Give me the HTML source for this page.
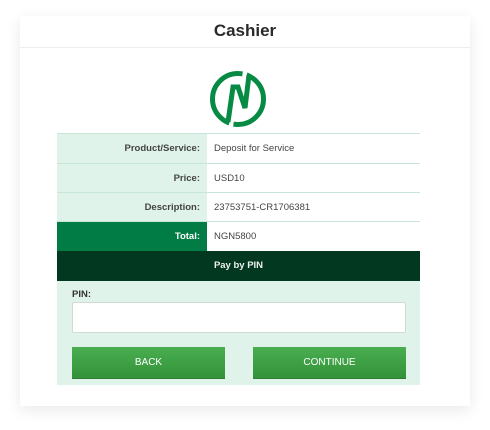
<!DOCTYPE html>
<html><head><style>
body{margin:0;width:490px;height:430px;background:#fff;font-family:"Liberation Sans",Arial,sans-serif;position:relative;overflow:hidden}
.card{position:absolute;left:20px;top:16px;width:450px;height:390px;background:#fff;box-shadow:0 4px 14px rgba(0,0,0,0.09)}
.hd{position:absolute;left:20px;top:16px;width:450px;height:31px;border-bottom:1px solid #eee;text-align:center;font-weight:bold;font-size:17px;line-height:29px;color:#2a2a2a}
.row{position:absolute;left:57px;width:363px;height:29px;border-top:1px solid #c7e6d8;font-size:9.5px;line-height:29px}
.row .l{position:absolute;left:0;top:0;width:150px;height:29px;background:#dff3ea;text-align:right;box-sizing:border-box;padding-right:7px;font-weight:bold;color:#444}
.row .v{position:absolute;left:157px;top:0;color:#444}
.bar{position:absolute;left:57px;top:251px;width:363px;height:30px;background:#023820;color:#f0f0f0;font-weight:bold;font-size:9.5px;text-align:center;line-height:30px}
.pin{position:absolute;left:57px;top:281px;width:363px;height:104px;background:#dff3ea}
.btn{position:absolute;top:66px;width:153px;height:31px;background:linear-gradient(#4aae50,#33923a);color:#fff;font-size:10px;text-align:center;line-height:31px;border-bottom:1px solid #2e7d32}
</style></head><body>
<div class="card"></div>
<div class="hd">Cashier</div>
<svg style="position:absolute;left:208px;top:70px" width="60" height="58" viewBox="0 0 60 58">
<circle cx="30" cy="29" r="25.5" fill="none" stroke="#068a44" stroke-width="5"/>
<path d="M35 0 L40 0 L38 8 L34 8 Z M20 58 L25 58 L26 50 L22 50 Z" fill="#fff"/>
<polyline points="20,52 25,17 30,17 37,38 41,5" fill="none" stroke="#068a44" stroke-width="5" stroke-linejoin="miter"/>
</svg>
<div class="row" style="top:133px"><div class="l">Product/Service:</div><div class="v">Deposit for Service</div></div>
<div class="row" style="top:163px"><div class="l">Price:</div><div class="v">USD10</div></div>
<div class="row" style="top:192px"><div class="l">Description:</div><div class="v">23753751-CR1706381</div></div>
<div class="row" style="top:221px;height:30px"><div class="l" style="background:#017c45;color:#fff;height:30px">Total:</div><div class="v">NGN5800</div></div>
<div class="bar">Pay by PIN</div>
<div class="pin">
<div style="position:absolute;left:15px;top:8px;font-size:9.5px;font-weight:bold;color:#333">PIN:</div>
<div style="position:absolute;left:15px;top:21px;width:332px;height:29px;background:#fff;border:1px solid #cfdcd6;border-radius:2px"></div>
<div class="btn" style="left:15px">BACK</div>
<div class="btn" style="left:196px">CONTINUE</div>
</div>
</body></html>
